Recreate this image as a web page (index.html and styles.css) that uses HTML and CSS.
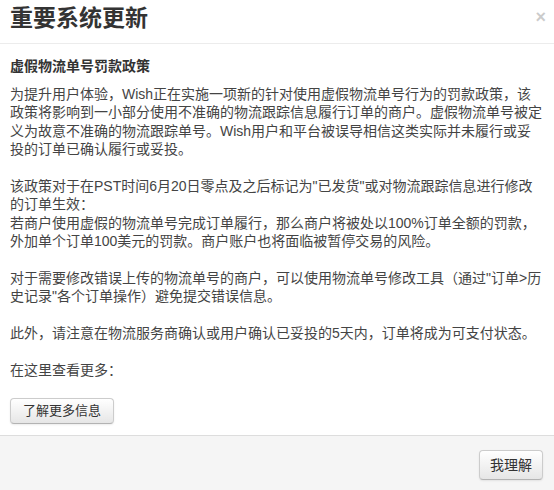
FILE: index.html
```html
<!DOCTYPE html>
<html lang="zh-CN">
<head>
<meta charset="utf-8">
<title>重要系统更新</title>
<link rel="stylesheet" href="styles.css">
</head>
<body>
<div class="modal">
  <div class="modal-header">
    <h3 class="modal-title">重要系统更新</h3>
    <button class="close" type="button">×</button>
  </div>
  <div class="modal-body">
    <h4 class="section-title">虚假物流单号罚款政策</h4>
    <p>为提升用户体验，Wish正在实施一项新的针对使用虚假物流单号行为的罚款政策，该政策将影响到一小部分使用不准确的物流跟踪信息履行订单的商户。虚假物流单号被定义为故意不准确的物流跟踪单号。Wish用户和平台被误导相信这类实际并未履行或妥投的订单已确认履行或妥投。</p>
    <p>该政策对于在PST时间6月20日零点及之后标记为"已发货"或对物流跟踪信息进行修改的订单生效：<br>若商户使用虚假的物流单号完成订单履行，那么商户将被处以100%订单全额的罚款，外加单个订单100美元的罚款。商户账户也将面临被暂停交易的风险。</p>
    <p>对于需要修改错误上传的物流单号的商户，可以使用物流单号修改工具（通过"订单&gt;历史记录"各个订单操作）避免提交错误信息。</p>
    <p>此外，请注意在物流服务商确认或用户确认已妥投的5天内，订单将成为可支付状态。</p>
    <p>在这里查看更多：</p>
    <button class="btn btn-small" type="button">了解更多信息</button>
  </div>
  <div class="modal-footer">
    <button class="btn" type="button">我理解</button>
  </div>
</div>
</body>
</html>
```
FILE: styles.css
```css
* {
  box-sizing: border-box;
}

html, body {
  margin: 0;
  padding: 0;
  background: #ffffff;
}

body {
  font-family: "Liberation Sans", "Noto Sans CJK SC", sans-serif;
  color: #444444;
}

.modal {
  width: 554px;
  height: 490px;
  display: flex;
  flex-direction: column;
  background: #ffffff;
}

.modal-header {
  height: 44px;
  padding: 3px 8px 0 10px;
  border-bottom: 1px solid #ececec;
  display: flex;
  justify-content: space-between;
  align-items: flex-start;
}

.modal-title {
  margin: 0;
  font-size: 23px;
  line-height: 30px;
  font-weight: bold;
  color: #333333;
}

.close {
  margin-top: 5px;
  padding: 0;
  border: 0;
  background: transparent;
  font-family: "Liberation Sans", sans-serif;
  font-size: 18px;
  line-height: 18px;
  font-weight: bold;
  color: #000000;
  opacity: 0.2;
  cursor: pointer;
}

.modal-body {
  flex: 1;
  padding: 12px 12px 0 10px;
}

.section-title {
  margin: 0 0 9px;
  font-size: 14px;
  line-height: 20px;
  font-weight: bold;
  color: #333333;
}

.modal-body p {
  margin: 0 0 18.4px;
  font-size: 14px;
  line-height: 18.4px;
}

.btn {
  display: inline-block;
  padding: 0 10px;
  height: 30px;
  font-family: "Liberation Sans", "Noto Sans CJK SC", sans-serif;
  font-size: 14px;
  line-height: 28px;
  color: #333333;
  background: linear-gradient(to bottom, #ffffff, #e6e6e6);
  border: 1px solid #cccccc;
  border-bottom-color: #b3b3b3;
  border-radius: 4px;
  box-shadow: inset 0 1px 0 rgba(255, 255, 255, 0.2), 0 1px 2px rgba(0, 0, 0, 0.08);
  cursor: pointer;
}

.btn-small {
  height: 26px;
  padding: 0 12px;
  font-size: 13px;
  line-height: 24px;
}

.modal-footer {
  height: 55px;
  padding: 14px 11px 0 0;
  background: #f5f5f5;
  border-top: 1px solid #dddddd;
  display: flex;
  justify-content: flex-end;
  align-items: flex-start;
}
```
